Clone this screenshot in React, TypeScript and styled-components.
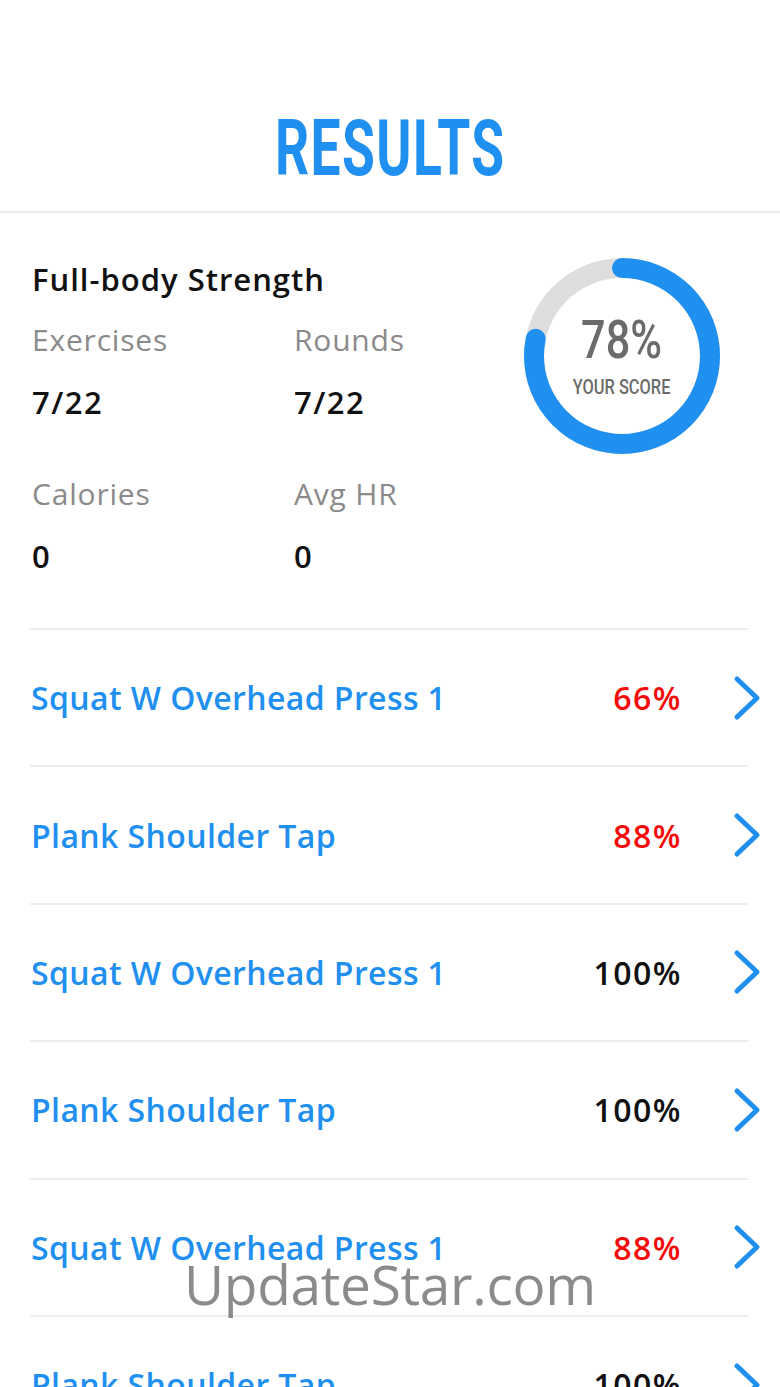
import styled, { createGlobalStyle } from 'styled-components';

const GlobalStyle = createGlobalStyle`
  body {
    margin: 0;
    background: #ffffff;
    font-family: 'Open Sans', Lato, sans-serif;
  }
`;

const BLUE = '#1f8ff0';

const Page = styled.div`
  position: relative;
  width: 780px;
  height: 1387px;
  overflow: hidden;
  background: #ffffff;
`;

const Header = styled.header`
  height: 211px;
  display: flex;
  align-items: flex-end;
  justify-content: center;
  border-bottom: 2px solid #ececec;
`;

const Title = styled.h1`
  margin: 0 0 23px;
  font-family: Roboto, 'Liberation Sans', sans-serif;
  font-size: 78px;
  font-weight: 700;
  line-height: 1;
  color: ${BLUE};
  letter-spacing: 2px;
  transform: scaleX(0.685);
`;

const Summary = styled.section`
  display: flex;
  justify-content: space-between;
  padding: 44px 58px 0 32px;
  height: 415px;
  box-sizing: border-box;
`;

const StatsColumn = styled.div`
  display: flex;
  flex-direction: column;
`;

const WorkoutName = styled.h2`
  margin: 0 0 17px;
  font-size: 31px;
  font-weight: 600;
  letter-spacing: 1px;
  color: #111;
  line-height: 44px;
`;

const StatsGrid = styled.div`
  display: grid;
  grid-template-columns: 262px 200px;
  row-gap: 48px;
`;

const Stat = styled.div`
  display: flex;
  flex-direction: column;
  gap: 18px;
`;

const StatLabel = styled.span`
  font-size: 30px;
  letter-spacing: 0.8px;
  color: #8a8a8a;
  line-height: 44px;
`;

const StatValue = styled.span`
  font-size: 31px;
  font-weight: 600;
  letter-spacing: 1.5px;
  color: #111;
  line-height: 44px;
`;

const ScoreRing = styled.div`
  position: relative;
  width: 200px;
  height: 200px;
  margin-top: -1px;
`;

const ScoreText = styled.div`
  position: absolute;
  inset: 0;
  padding-top: 4px;
  display: flex;
  flex-direction: column;
  align-items: center;
  justify-content: center;
  color: #6b6b6b;
  font-family: Roboto, 'Liberation Sans', sans-serif;
`;

const ScoreValue = styled.span`
  font-size: 54px;
  font-weight: 500;
  line-height: 1;
  transform: scaleX(0.8);
  margin-top: -4px;
`;

const ScoreLabel = styled.span`
  font-size: 21px;
  font-weight: 500;
  margin-top: 8px;
  transform: scaleX(0.78);
  white-space: nowrap;
`;

const List = styled.div`
  margin: 0 32px 0 30px;
  border-top: 2px solid #eeeeee;
`;

const Row = styled.div`
  display: flex;
  align-items: center;
  height: 135.4px;
  border-bottom: 2px solid #eeeeee;
`;

const ExerciseName = styled.span`
  flex: 1;
  padding-left: 1px;
  font-size: 32px;
  font-weight: 600;
  letter-spacing: 0.4px;
  color: ${BLUE};
  white-space: nowrap;
`;

const Percent = styled.span<{ $color: string }>`
  font-size: 32px;
  font-weight: 600;
  letter-spacing: 1.5px;
  color: ${({ $color }) => $color};
  margin-right: 50px;
`;

const Chevron = styled.svg`
  width: 30px;
  height: 46px;
  margin-right: -14px;
  flex-shrink: 0;
`;

const Watermark = styled.div`
  position: absolute;
  left: 184px;
  top: 1246px;
  font-family: 'Open Sans', sans-serif;
  font-size: 55px;
  color: rgba(110, 110, 110, 0.8);
  letter-spacing: -0.3px;
  pointer-events: none;
`;

const stats = [
  { label: 'Exercises', value: '7/22' },
  { label: 'Rounds', value: '7/22' },
  { label: 'Calories', value: '0' },
  { label: 'Avg HR', value: '0' },
];

const rows = [
  { name: 'Squat W Overhead Press 1', pct: 66 },
  { name: 'Plank Shoulder Tap', pct: 88 },
  { name: 'Squat W Overhead Press 1', pct: 100 },
  { name: 'Plank Shoulder Tap', pct: 100 },
  { name: 'Squat W Overhead Press 1', pct: 88 },
  { name: 'Plank Shoulder Tap', pct: 100 },
];

const Ring = ({ score }: { score: number }) => {
  const r = 88;
  const c = 2 * Math.PI * r;
  return (
    <svg width="200" height="200" viewBox="0 0 200 200">
      <circle cx="100" cy="100" r={r} fill="none" stroke="#dedede" strokeWidth="20" />
      <circle
        cx="100"
        cy="100"
        r={r}
        fill="none"
        stroke={BLUE}
        strokeWidth="20"
        strokeLinecap="round"
        strokeDasharray={`${(c * score) / 100} ${c}`}
        transform="rotate(-90 100 100)"
      />
    </svg>
  );
};

const App = () => {
  const score = 78;
  return (
    <Page>
      <GlobalStyle />
      <Header>
        <Title>RESULTS</Title>
      </Header>

      <Summary>
        <StatsColumn>
          <WorkoutName>Full-body Strength</WorkoutName>
          <StatsGrid>
            {stats.map((s) => (
              <Stat key={s.label}>
                <StatLabel>{s.label}</StatLabel>
                <StatValue>{s.value}</StatValue>
              </Stat>
            ))}
          </StatsGrid>
        </StatsColumn>
        <ScoreRing>
          <Ring score={score} />
          <ScoreText>
            <ScoreValue>{score}%</ScoreValue>
            <ScoreLabel>YOUR SCORE</ScoreLabel>
          </ScoreText>
        </ScoreRing>
      </Summary>

      <List>
        {rows.map((row, i) => (
          <Row key={i}>
            <ExerciseName>{row.name}</ExerciseName>
            <Percent $color={row.pct < 100 ? '#f50a0a' : '#111'}>{row.pct}%</Percent>
            <Chevron viewBox="0 0 30 46">
              <polyline
                points="5,4 25,23 5,42"
                fill="none"
                stroke={BLUE}
                strokeWidth="5"
                strokeLinecap="round"
                strokeLinejoin="round"
              />
            </Chevron>
          </Row>
        ))}
      </List>

      <Watermark>UpdateStar.com</Watermark>
    </Page>
  );
};

export default App;
